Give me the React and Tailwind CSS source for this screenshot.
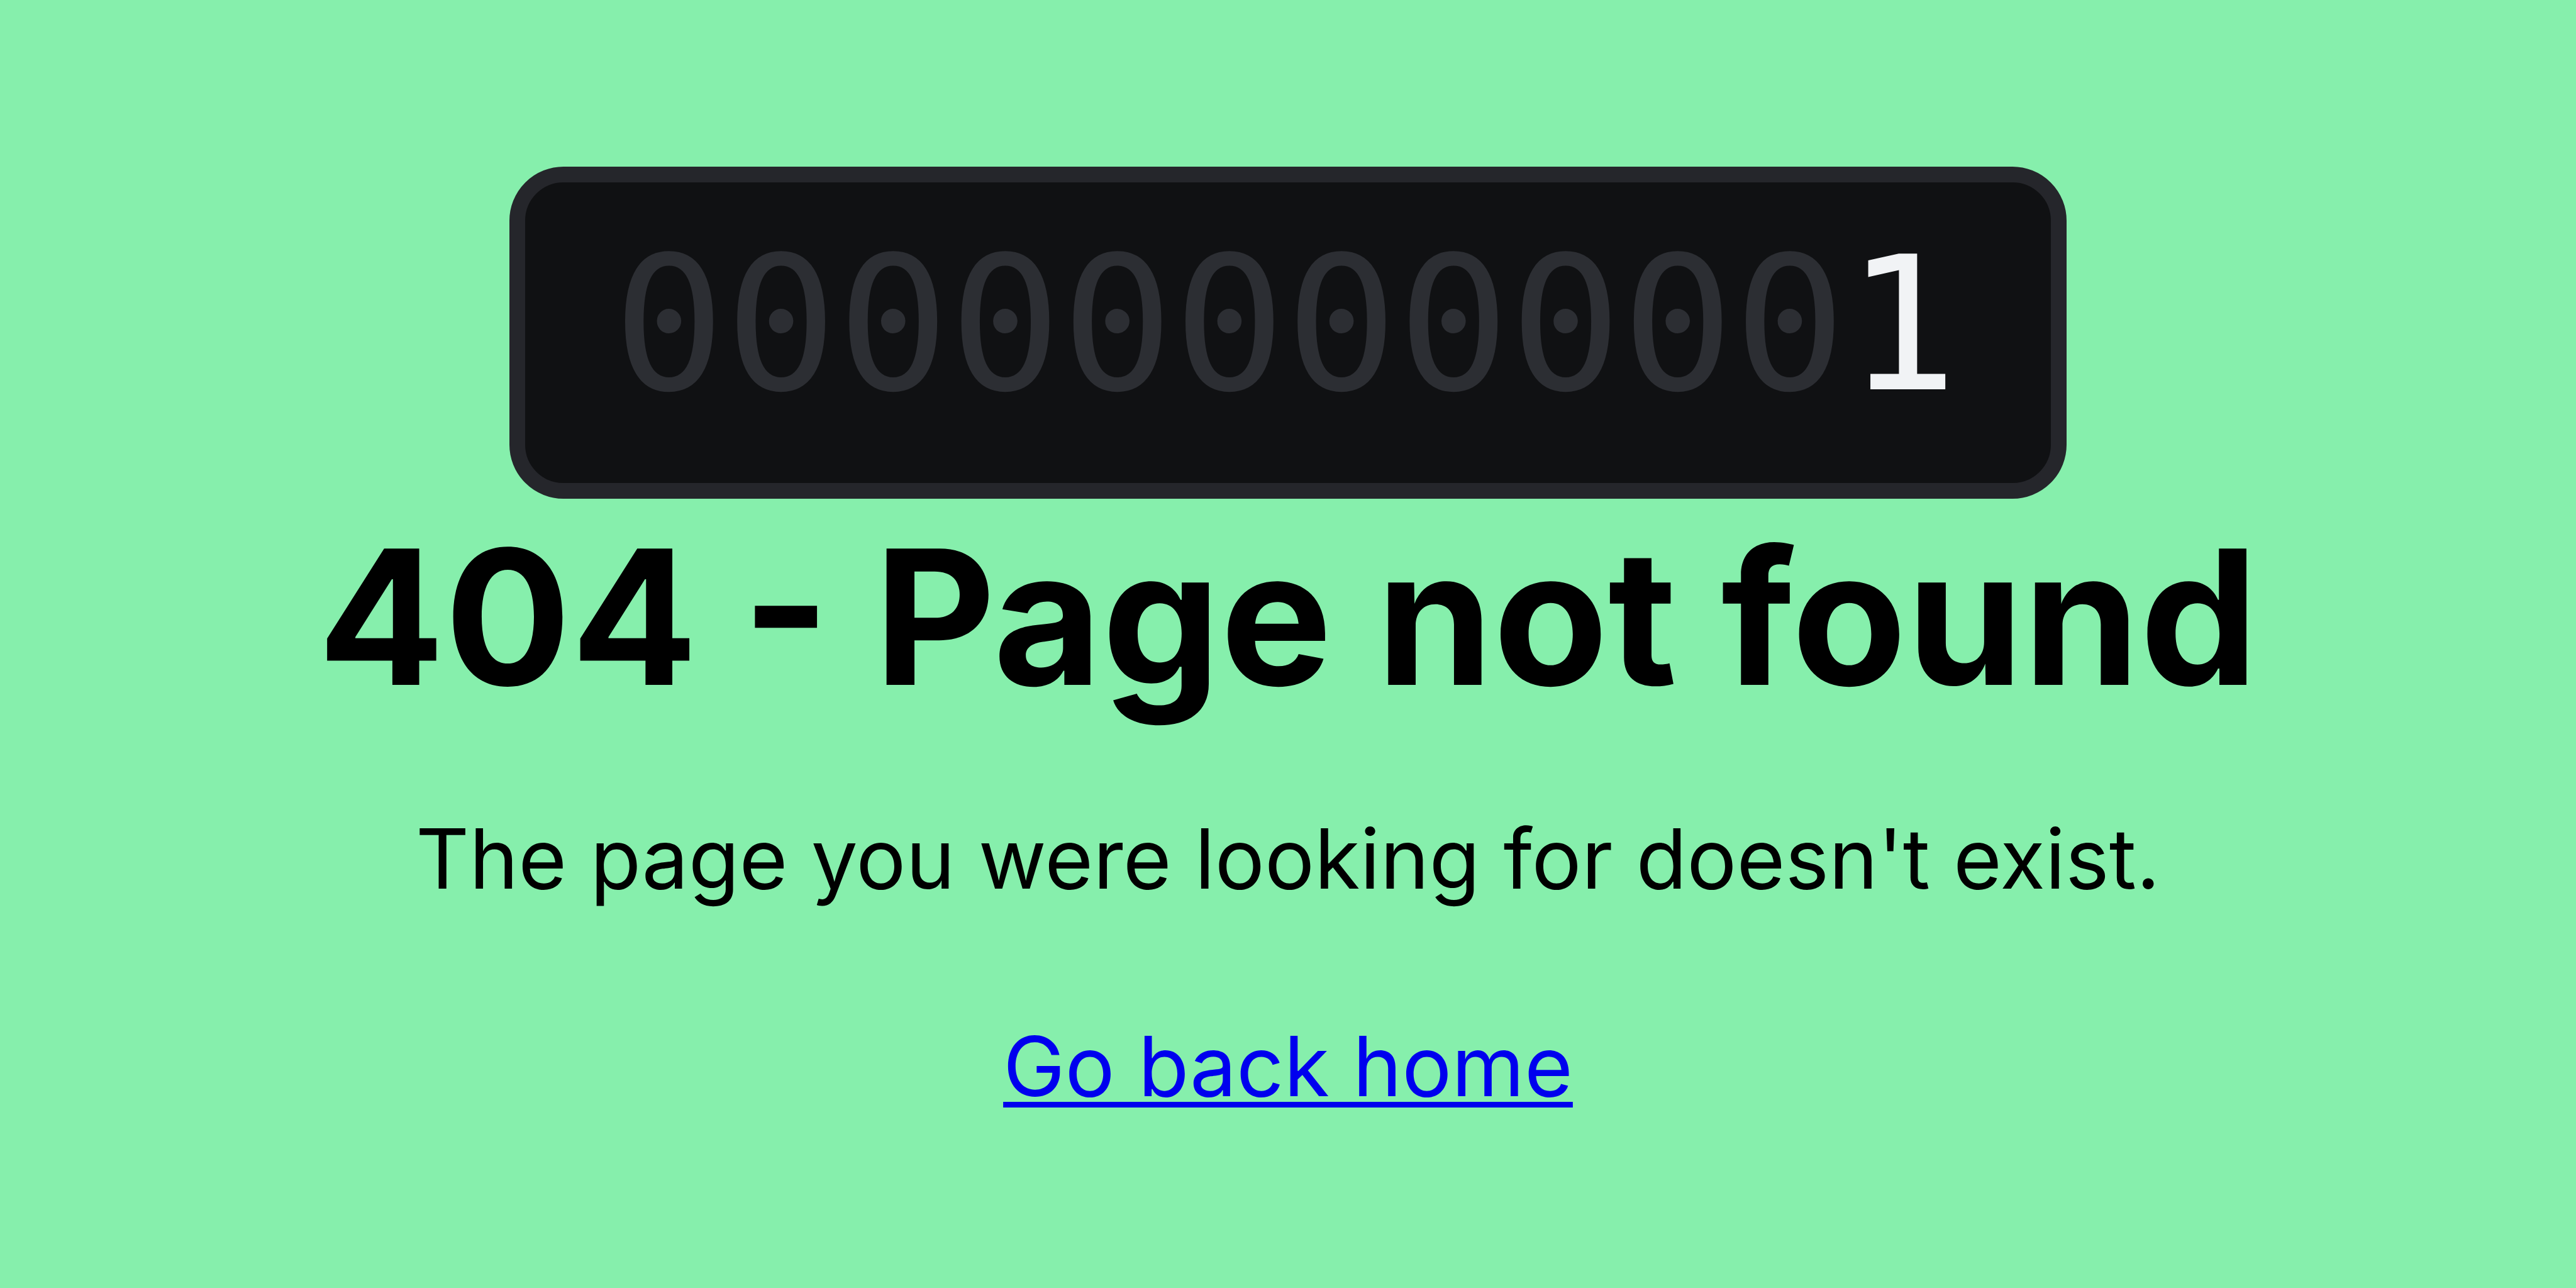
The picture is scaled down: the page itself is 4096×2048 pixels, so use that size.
const DIGITS = 12;

function Counter({ value }) {
  const digits = String(value);
  const padding = "0".repeat(DIGITS - digits.length);
  return (
    <div className="rounded-[86px] border-[25px] border-[#25262b] bg-[#101113] pr-[148px] pb-6 pl-[140px] font-['DejaVu_Sans_Mono',monospace] text-[296px] leading-[454px] whitespace-nowrap text-[#f1f3f5]">
      <span className="text-[#2c2e33]">{padding}</span>
      {digits}
    </div>
  );
}

export default function App() {
  return (
    <main className="flex min-h-screen flex-col items-center justify-center bg-[#86efac] pb-2 text-center font-['Inter',sans-serif] text-[132px] leading-[160px] text-black">
      <Counter value={1} />
      <h1 className="mt-2 text-[298px] leading-[360px] font-bold">404 - Page not found</h1>
      <p className="mt-[124px]">The page you were looking for doesn't exist.</p>
      <a href="/" className="mt-[170px] text-[#0000ee] underline decoration-[9px] underline-offset-[9px]">
        Go back home
      </a>
    </main>
  );
}
